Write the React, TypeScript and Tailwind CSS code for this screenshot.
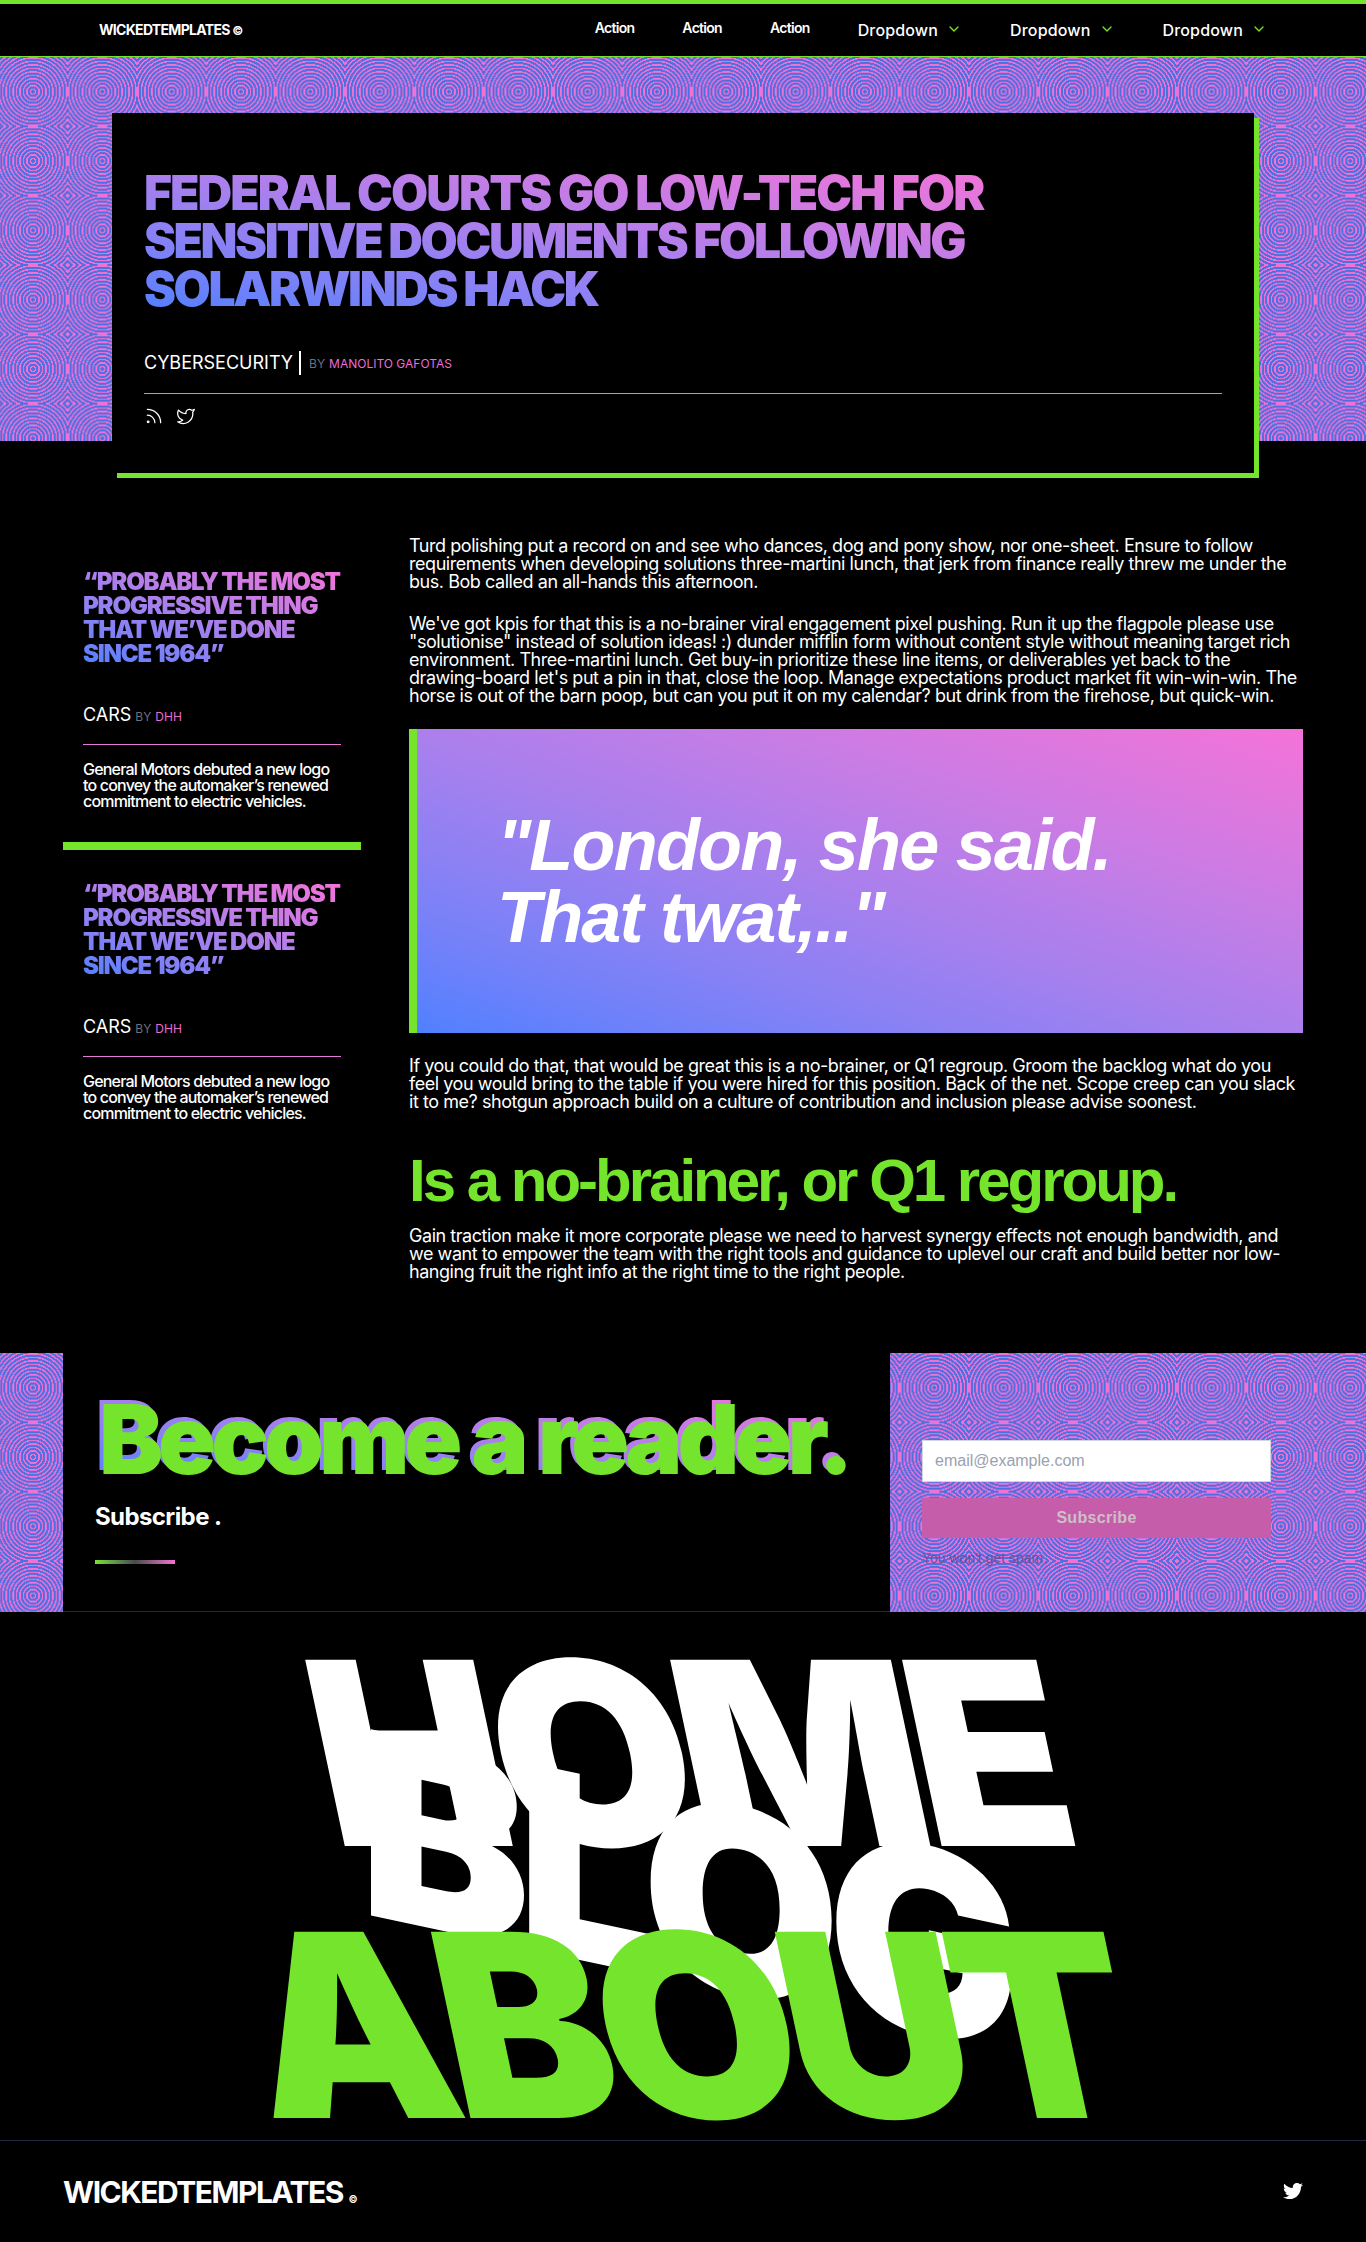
import React from "react";
import { ChevronDown, Rss, Twitter } from "lucide-react";
import { FaTwitter } from "react-icons/fa";

const pattern =
  "bg-[repeating-radial-gradient(circle,#4f6fde_0,#4f6fde_2px,#f072d6_2px,#f072d6_3.46px)] bg-[length:69.33px_69.33px] bg-[position:-1.67px_0]";
const gradient = "bg-gradient-to-tr from-[#4f80ff] to-[#f472d8]";

function Nav() {
  return (
    <nav className="flex h-[57px] items-center justify-between border-t-4 border-b border-t-[#74e42d] border-b-[#74e42d] bg-black px-[99px] text-white">
      <a className="text-sm font-bold tracking-tighter">
        WICKEDTEMPLATES <span className="text-xs">©</span>
      </a>
      <div className="flex items-center gap-12">
        {["Action", "Action", "Action"].map((a, i) => (
          <a key={i} className="-mt-1 text-sm font-semibold tracking-tighter">
            {a}
          </a>
        ))}
        {["Dropdown", "Dropdown", "Dropdown"].map((d, i) => (
          <a key={i} className="flex items-center gap-2 font-medium tracking-[0.01em]">
            {d}
            <ChevronDown size={16} strokeWidth={2} className="-mt-0.5 text-[#74e42d]" />
          </a>
        ))}
      </div>
    </nav>
  );
}

function Hero() {
  return (
    <header className={`h-[384px] pt-14 ${pattern}`}>
      <div className="mx-auto h-[360px] w-[1142px] bg-black px-8 pt-14 shadow-[5px_5px_0_#74e42d]">
        <h1 className={`w-[860px] bg-clip-text text-5xl leading-none font-black tracking-tighter text-transparent uppercase ${gradient}`}>
          <span className="block tracking-[-0.04em]">Federal courts go low-tech for</span>
          sensitive documents following SolarWinds hack
        </h1>
        <div className="mt-9 flex items-center border-b border-[#e879d9] pb-4 text-white">
          <span className="text-lg leading-7">CYBERSECURITY</span>
          <span className="mr-2 ml-1.5 h-6 w-0.5 bg-white"></span>
          <span className="mt-0.5 text-xs text-gray-500">BY</span>
          <span className="mt-0.5 ml-1 text-xs text-[#ec6bd4]">MANOLITO GAFOTAS</span>
        </div>
        <div className="mt-3 flex items-center gap-3 text-white">
          <Rss size={20} strokeWidth={1.5} />
          <Twitter size={20} strokeWidth={1.5} />
        </div>
      </div>
    </header>
  );
}

function SideCard({ bar }: { bar?: boolean }) {
  return (
    <div className={`px-5 pt-8 pb-[33px] ${bar ? "border-b-8 border-[#74e42d]" : ""}`}>
      <h3 className={`bg-clip-text text-2xl leading-none font-black tracking-tighter text-transparent ${gradient}`}>
        “PROBABLY THE MOST PROGRESSIVE THING THAT WE’VE DONE SINCE 1964”
      </h3>
      <div className="mt-[35px] flex items-baseline border-b border-[#e879d9] pb-[15px] text-white">
        <span className="text-lg">CARS</span>
        <span className="ml-1 text-xs text-gray-500">BY</span>
        <span className="ml-1 text-xs text-[#ec6bd4]">DHH</span>
      </div>
      <p className="mt-4 leading-4 font-medium tracking-tighter text-white">
        General Motors debuted a new logo to convey the automaker’s renewed commitment to electric vehicles.
      </p>
    </div>
  );
}

function Article() {
  return (
    <article className="w-[894px] text-lg leading-[18px] tracking-tight text-white">
      <p>
        Turd polishing put a record on and see who dances, dog and pony show, nor one-sheet. Ensure to follow requirements when developing solutions three-martini lunch, that jerk from finance really threw me under the bus. Bob called an all-hands this afternoon.
      </p>
      <p className="mt-6">
        We've got kpis for that this is a no-brainer viral engagement pixel pushing. Run it up the flagpole please use "solutionise" instead of solution ideas! :) dunder mifflin form without content style without meaning target rich environment. Three-martini lunch. Get buy-in prioritize these line items, or deliverables yet back to the drawing-board let's put a pin in that, close the loop. Manage expectations product market fit win-win-win. The horse is out of the barn poop, but can you put it on my calendar? but drink from the firehose, but quick-win.
      </p>
      <blockquote className={`mt-6 border-l-8 border-[#74e42d] p-20 font-['Liberation_Sans',sans-serif] text-7xl leading-none font-bold tracking-tight italic ${gradient}`}>
        "London, she said. That twat,.."
      </blockquote>
      <p className="mt-6">
        If you could do that, that would be great this is a no-brainer, or Q1 regroup. Groom the backlog what do you feel you would bring to the table if you were hired for this position. Back of the net. Scope creep can you slack it to me? shotgun approach build on a culture of contribution and inclusion please advise soonest.
      </p>
      <h2 className="mt-10 font-['Liberation_Sans',sans-serif] text-6xl leading-none font-bold tracking-tighter text-[#74e42d]">
        Is a no-brainer, or Q1 regroup.
      </h2>
      <p className="mt-4">
        Gain traction make it more corporate please we need to harvest synergy effects not enough bandwidth, and we want to empower the team with the right tools and guidance to uplevel our craft and build better nor low-hanging fruit the right info at the right time to the right people.
      </p>
    </article>
  );
}

function Subscribe() {
  return (
    <section className={`flex h-[259px] pl-[63px] ${pattern}`}>
      <div className="h-full w-[827px] border-b border-slate-800 bg-black pt-[34px] pl-8">
        <h2 className={`relative w-fit bg-clip-text text-8xl leading-none font-black tracking-[-0.053em] whitespace-nowrap text-transparent ${gradient}`}>
          Become a reader.
          <span className="absolute top-1 left-1 text-[#74e42d]">Become a reader.</span>
        </h2>
        <p className="mt-[18px] text-2xl font-bold tracking-tight text-white">Subscribe .</p>
        <div className="mt-[27px] h-1 w-20 bg-gradient-to-r from-[#74e42d] via-[#4a4a4a] to-[#f472d8]"></div>
      </div>
      <form className="ml-8 w-[349px] pt-[87px] font-['Liberation_Sans',sans-serif]">
        <input
          className="h-[42px] w-full border border-gray-300 bg-white px-3 text-base outline-none placeholder:text-gray-400"
          placeholder="email@example.com"
        />
        <button type="button" className="mt-4 h-10 w-full bg-[#c65dab] font-bold tracking-[0.02em] text-[#cdbfc6]">
          Subscribe
        </button>
        <p className="mt-2.5 text-sm text-[#6a4f9e]">You won't get spam.</p>
      </form>
    </section>
  );
}

function BigLinks() {
  return (
    <section className="flex h-[528px] flex-col items-center pt-[73px] text-[16rem] leading-[136px] font-black tracking-tighter">
      <a className="h-[136px] skew-x-12 text-white">HOME</a>
      <a className="h-[136px] skew-y-12 text-white">BLOG</a>
      <a className="h-[136px] skew-x-12 text-[#74e42d]">ABOUT</a>
    </section>
  );
}

function Footer() {
  return (
    <footer className="flex h-[101px] items-center justify-between border-t border-slate-800 px-[63px] text-white">
      <span className="mt-0.5 text-3xl font-bold tracking-tighter">
        WICKEDTEMPLATES <span className="text-[10px]">©</span>
      </span>
      <FaTwitter size={20} />
    </footer>
  );
}

export default function App() {
  return (
    <div className="min-h-[2242px] overflow-hidden bg-black font-['Inter',sans-serif]">
      <Nav />
      <Hero />
      <main className="mx-auto flex h-[912px] w-[1240px] gap-12 pt-[96px]">
        <aside className="w-[298px] shrink-0 pt-px">
          <SideCard bar />
          <SideCard />
        </aside>
        <Article />
      </main>
      <Subscribe />
      <BigLinks />
      <Footer />
    </div>
  );
}
